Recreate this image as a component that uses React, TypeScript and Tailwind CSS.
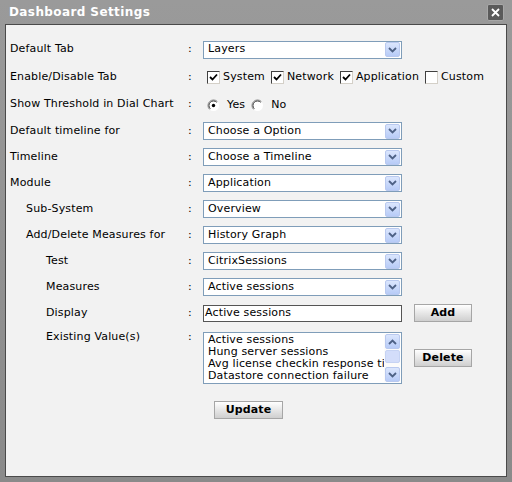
import React from 'react';

const font = { fontFamily: '"DejaVu Sans", Verdana, sans-serif' };

const Chevron = ({ up = false }: { up?: boolean }) => (
  <svg width="9" height="6" viewBox="0 0 9 6" className={up ? 'rotate-180' : ''}>
    <path d="M1 1 L4.5 4.5 L8 1" stroke="#4d6185" strokeWidth="1.8" fill="none" />
  </svg>
);

const ArrowBtn = ({ up = false }: { up?: boolean }) => (
  <div className="w-[15px] h-[15px] rounded-[2px] border border-[#b9c9ef] bg-gradient-to-b from-[#dbe6fd] to-[#b7cbf7] flex items-center justify-center">
    <Chevron up={up} />
  </div>
);

const Select = ({ value }: { value: string }) => (
  <div className="w-[199px] h-[18px] border border-[#7f9db9] bg-white flex items-center justify-between pl-[4px] pr-[1px] text-[11px] text-black">
    <span>{value}</span>
    <ArrowBtn />
  </div>
);

const Check = ({ checked }: { checked: boolean }) => (
  <div className="w-[13px] h-[13px] bg-white border border-t-[#404040] border-l-[#404040] border-r-[#d4d0c8] border-b-[#d4d0c8] flex items-center justify-center">
    {checked && (
      <svg width="9" height="9" viewBox="0 0 9 9">
        <path d="M1 4 L3.5 6.5 L8 1.5" stroke="#000" strokeWidth="1.8" fill="none" />
      </svg>
    )}
  </div>
);

const Radio = ({ checked }: { checked: boolean }) => (
  <svg width="13" height="13" viewBox="0 0 13 13">
    <circle cx="6.5" cy="6.5" r="5.5" fill="#fff" />
    <path d="M10.4 2.6 A5.5 5.5 0 0 0 2.6 10.4" stroke="#808080" strokeWidth="1" fill="none" />
    <path d="M9.7 3.3 A4.5 4.5 0 0 0 3.3 9.7" stroke="#404040" strokeWidth="1" fill="none" />
    {checked && <circle cx="6.5" cy="6.5" r="1.7" fill="#000" />}
  </svg>
);

const Btn = ({ label, w }: { label: string; w: string }) => (
  <button
    className={`${w} h-[18px] border border-[#a6a6a6] bg-gradient-to-b from-[#ffffff] to-[#cfcfcf] text-[11px] font-bold text-black flex items-center justify-center`}
    style={font}
  >
    {label}
  </button>
);

const Row = ({
  label,
  indent,
  h,
  children,
  top = false,
}: {
  label: string;
  indent: string;
  h: string;
  children: React.ReactNode;
  top?: boolean;
}) => (
  <div className={`flex ${h} ${top ? 'items-start' : 'items-center'}`}>
    <div className={`w-[178px] ${indent} ${top ? 'pt-[3px]' : ''}`}>{label}</div>
    <div className={`w-[15px] ${top ? 'pt-[3px]' : ''}`}>:</div>
    <div className="flex-1 flex items-center">{children}</div>
  </div>
);

export default function App() {
  return (
    <div
      className="w-[512px] h-[482px] bg-gradient-to-b from-[#9a9a9a] to-[#8a8a8a] flex flex-col px-[5px] pb-[5px] text-[11px] text-black tracking-[0.15px]"
      style={font}
    >
      <div className="h-[24px] flex items-center justify-between pl-[4px] pr-[3px]">
        <span className="text-white font-bold text-[12px] tracking-[0.4px]">Dashboard Settings</span>
        <div className="w-[17px] h-[17px] rounded-[2px] bg-[#5a5a5a] border border-[#a8a8a8] flex items-center justify-center">
          <svg width="9" height="9" viewBox="0 0 9 9">
            <path d="M1 1 L8 8 M8 1 L1 8" stroke="#fff" strokeWidth="1.8" />
          </svg>
        </div>
      </div>
      <div className="flex-1 bg-[#f2f2f2] border border-[#4a4a4a] pt-[11px] pl-[4px] flex flex-col">
        <Row label="Default Tab" indent="" h="h-[27px]">
          <Select value="Layers" />
        </Row>
        <Row label="Enable/Disable Tab" indent="" h="h-[28px]">
          <div className="flex items-center pl-[4px] pt-[1px]">
            <Check checked />
            <span className="ml-[3px] mr-[6px]">System</span>
            <Check checked />
            <span className="ml-[3px] mr-[6px]">Network</span>
            <Check checked />
            <span className="ml-[3px] mr-[6px]">Application</span>
            <Check checked={false} />
            <span className="ml-[3px]">Custom</span>
          </div>
        </Row>
        <Row label="Show Threshold in Dial Chart" indent="" h="h-[27px]">
          <div className="flex items-center pl-[4px] pt-[1px]">
            <Radio checked />
            <span className="ml-[7px] mr-[6px]">Yes</span>
            <Radio checked={false} />
            <span className="ml-[7px]">No</span>
          </div>
        </Row>
        <Row label="Default timeline for" indent="" h="h-[26px]">
          <Select value="Choose a Option" />
        </Row>
        <Row label="Timeline" indent="" h="h-[26px]">
          <Select value="Choose a Timeline" />
        </Row>
        <Row label="Module" indent="" h="h-[26px]">
          <Select value="Application" />
        </Row>
        <Row label="Sub-System" indent="pl-[16px]" h="h-[26px]">
          <Select value="Overview" />
        </Row>
        <Row label="Add/Delete Measures for" indent="pl-[16px]" h="h-[26px]">
          <Select value="History Graph" />
        </Row>
        <Row label="Test" indent="pl-[36px]" h="h-[26px]">
          <Select value="CitrixSessions" />
        </Row>
        <Row label="Measures" indent="pl-[36px]" h="h-[26px]">
          <Select value="Active sessions" />
        </Row>
        <Row label="Display" indent="pl-[36px]" h="h-[26px]">
          <div className="w-[199px] h-[17px] border border-[#555] bg-white flex items-center pl-[1px]">
            Active sessions
          </div>
          <div className="ml-[12px]">
            <Btn label="Add" w="w-[58px]" />
          </div>
        </Row>
        <Row label="Existing Value(s)" indent="pl-[36px]" h="h-[60px]" top>
          <div className="flex items-center pt-[6px]">
            <div className="w-[199px] h-[52px] border border-[#7f9db9] bg-white flex p-[1px]">
              <div className="flex-1 overflow-hidden whitespace-nowrap pl-[3px] leading-[12px]">
                <div>Active sessions</div>
                <div>Hung server sessions</div>
                <div>Avg license checkin response time</div>
                <div>Datastore connection failure</div>
              </div>
              <div className="w-[16px] flex flex-col justify-between items-center bg-[#fbfbfb]">
                <ArrowBtn up />
                <div className="w-[15px] flex-1 my-[1px] rounded-[2px] border border-[#c6d3f3] bg-[#d3ddfa] mb-[4px]" />
                <ArrowBtn />
              </div>
            </div>
            <div className="ml-[12px]">
              <Btn label="Delete" w="w-[58px]" />
            </div>
          </div>
        </Row>
        <div className="pl-[204px] pt-[15px]">
          <Btn label="Update" w="w-[69px]" />
        </div>
      </div>
    </div>
  );
}
